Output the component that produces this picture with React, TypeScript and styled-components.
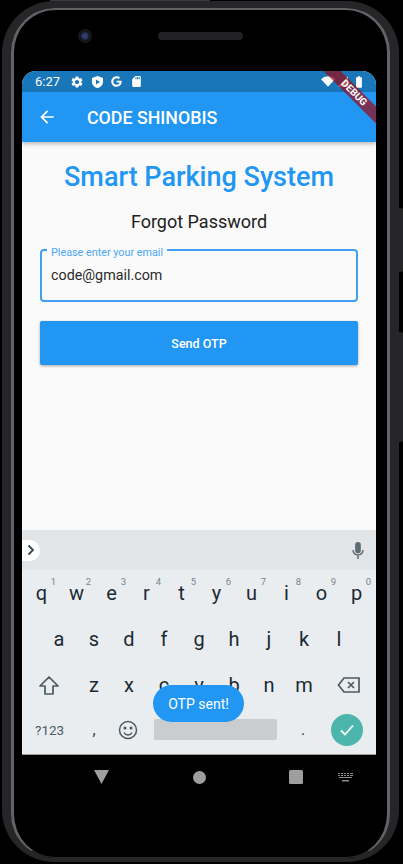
import React from 'react';
import styled, { createGlobalStyle } from 'styled-components';
import { FaGoogle } from 'react-icons/fa';
import { MdArrowBack, MdBatteryFull, MdSdCard, MdSettings } from 'react-icons/md';

const Global = createGlobalStyle`
    html, body { margin: 0; padding: 0; background: #000; }
    body { width: 403px; height: 864px; overflow: hidden; font-family: Roboto, "Liberation Sans", sans-serif; }
`;

const Shell = styled.div`
    position: relative;
    width: 397px;
    height: 861px;
    box-sizing: border-box;
    margin: 1px 0 0 2px;
    border-style: solid;
    border-width: 7px 9px 4px 9px;
    border-color: #262628;
    border-radius: 52px;
    background: #000;
`;
const Inner = styled.div`
    height: 100%;
    box-sizing: border-box;
    border-style: solid;
    border-width: 2px 3px 1px 3px;
    border-color: #626367 #626367 #2a2a2a #626367;
    border-radius: 44px;
    background: #000;
    padding: 0 11px 0 8px;
    display: flex;
    flex-direction: column;
`;
const SideButton = styled.div<{ $top: number; $height: number }>`
    position: absolute;
    top: ${p => p.$top}px;
    right: -13px;
    width: 4px;
    height: ${p => p.$height}px;
    background: #262628;
    border-radius: 0 2px 2px 0;
`;
const TopButton = styled.div`
    position: absolute;
    top: -8px;
    left: 39px;
    width: 160px;
    height: 1px;
    background: #3a3a3c;
`;
const Bezel = styled.div`
    height: 61px;
    flex: none;
    box-sizing: border-box;
    display: flex;
    align-items: center;
    padding: 0 0 10px 56px;
    gap: 66px;
`;
const Camera = styled.div`
    width: 14px;
    height: 14px;
    border-radius: 50%;
    background: radial-gradient(circle, #2f3d6b 0 22%, #12141a 48%, #1d1d20 100%);
`;
const Speaker = styled.div`
    width: 85px;
    height: 8px;
    border-radius: 4px;
    background: #222225;
`;
const Screen = styled.div`
    width: 354px;
    height: 684px;
    flex: none;
    position: relative;
    overflow: hidden;
    border-radius: 14px 14px 0 0;
    background: #fafafa;
    display: flex;
    flex-direction: column;
`;
const StatusBar = styled.div`
    height: 21px;
    flex: none;
    background: #1976b9;
    color: #fff;
    display: flex;
    align-items: center;
    padding: 0 13px;
    font-size: 13px;
`;
const Clock = styled.span`
    width: 35px;
`;
const StatusIcons = styled.div`
    display: flex;
    align-items: center;
    gap: 8px;
`;
const SystemIcons = styled.div`
    display: flex;
    align-items: center;
    gap: 3px;
    margin-left: auto;
`;
const BatteryIcon = styled(MdBatteryFull)`
    margin: 0 -3px 0 1px;
`;
const AppBar = styled.div`
    height: 50px;
    flex: none;
    background: #2196f3;
    color: #fff;
    display: flex;
    align-items: center;
    padding-left: 15px;
    box-shadow: 0 2px 4px rgba(0, 0, 0, 0.25);
    z-index: 1;
`;
const AppTitle = styled.div`
    font-size: 17.8px;
    font-weight: 500;
    margin-left: 30px;
`;
const Ribbon = styled.div`
    position: absolute;
    top: 16px;
    right: -23px;
    width: 90px;
    height: 12px;
    line-height: 12px;
    background: rgba(157, 7, 17, 0.7);
    color: #fff;
    font-size: 10px;
    font-weight: 700;
    text-align: center;
    transform: rotate(45deg);
    z-index: 3;
`;
const Body = styled.div`
    flex: 1;
    display: flex;
    flex-direction: column;
    padding: 0 18px;
`;
const Heading = styled.h1`
    margin: 19px 0 0;
    font-size: 27px;
    line-height: 32px;
    font-weight: 500;
    color: #2196f3;
    text-align: center;
    white-space: nowrap;
`;
const SubHeading = styled.h2`
    margin: 18px 0 0;
    font-size: 18px;
    line-height: 22px;
    font-weight: 400;
    color: #212121;
    text-align: center;
`;
const Field = styled.div`
    position: relative;
    height: 53px;
    box-sizing: border-box;
    margin-top: 16px;
    border: 2px solid #42a0f3;
    border-radius: 4px;
    padding: 15px 9px;
    font-size: 14.3px;
    line-height: 18px;
    color: #2a2a2a;
`;
const FieldLabel = styled.span`
    position: absolute;
    top: -5px;
    left: 5px;
    padding: 0 4px;
    background: #fafafa;
    color: #4aa8f5;
    font-size: 10.8px;
    line-height: 13px;
`;
const SendButton = styled.div`
    margin-top: 19px;
    height: 44px;
    background: #2196f3;
    color: #fff;
    border-radius: 2px;
    display: flex;
    align-items: center;
    justify-content: center;
    font-size: 12.5px;
    font-weight: 500;
    box-shadow: 0 1px 3px rgba(0, 0, 0, 0.35);
`;
const Keyboard = styled.div`
    height: 225px;
    flex: none;
    background: #e9edf0;
    border-bottom: 1px solid #9a9c9e;
    box-sizing: border-box;
    display: flex;
    flex-direction: column;
`;
const Suggestions = styled.div`
    height: 40px;
    flex: none;
    background: #e1e5e8;
    display: flex;
    align-items: center;
    justify-content: space-between;
    padding-right: 11px;
`;
const Expand = styled.div`
    width: 18px;
    height: 21px;
    background: #fff;
    border-radius: 0 11px 11px 0;
    display: flex;
    align-items: center;
    justify-content: center;
`;
const KeyRow = styled.div`
    height: 46px;
    flex: none;
    display: flex;
    justify-content: center;
`;
const Key = styled.div<{ $wide?: boolean }>`
    position: relative;
    width: 35px;
    flex: ${p => (p.$wide ? '1' : 'none')};
    display: flex;
    align-items: center;
    justify-content: center;
    font-size: 20px;
    color: #1c2a33;
`;
const Hint = styled.span`
    position: absolute;
    top: 7px;
    right: 3px;
    font-size: 9.5px;
    line-height: 10px;
    color: #7b8388;
`;
const BottomRow = styled.div`
    flex: 1;
    display: flex;
    align-items: center;
    padding: 0 0 3px 13px;
    color: #4d5a62;
`;
const Symbols = styled.span`
    width: 36px;
    font-size: 13.5px;
`;
const Punct = styled.span<{ $w: number }>`
    width: ${p => p.$w}px;
    text-align: center;
    font-size: 16px;
    color: #33424b;
    display: flex;
    justify-content: center;
`;
const SpaceBar = styled.div`
    width: 123px;
    height: 21px;
    margin-left: 15px;
    border-radius: 2px;
    background: #c9cdd0;
`;
const Enter = styled.div`
    width: 32px;
    height: 32px;
    border-radius: 50%;
    margin-left: 2px;
    background: #4db6ac;
    display: flex;
    align-items: center;
    justify-content: center;
`;
const Toast = styled.div`
    position: absolute;
    left: 131px;
    bottom: 33px;
    width: 91px;
    height: 37px;
    border-radius: 19px;
    background: #2196f3;
    color: #fff;
    font-size: 14px;
    display: flex;
    align-items: center;
    justify-content: center;
    z-index: 2;
`;
const NavBar = styled.div`
    height: 44px;
    flex: none;
    display: flex;
    align-items: center;
    padding-left: 72px;
    gap: 83.5px;
`;
const NavKeyboard = styled.div`
    margin-left: -48.5px;
    display: flex;
    align-items: center;
`;

const TOP_ROW = [['q', '1'], ['w', '2'], ['e', '3'], ['r', '4'], ['t', '5'], ['y', '6'], ['u', '7'], ['i', '8'], ['o', '9'], ['p', '0']];
const MID_ROW = ['a', 's', 'd', 'f', 'g', 'h', 'j', 'k', 'l'];
const LOW_ROW = ['z', 'x', 'c', 'v', 'b', 'n', 'm'];

export default function App() {
    return <Shell>
        <Global />
        <TopButton />
        <SideButton $top={200} $height={64} />
        <SideButton $top={324} $height={110} />
        <Inner>
            <Bezel>
                <Camera />
                <Speaker />
            </Bezel>
            <Screen>
                <StatusBar>
                    <Clock>6:27</Clock>
                    <StatusIcons>
                        <MdSettings size={14} color="#fff" />
                        <svg width="11" height="12" viewBox="0 0 22 24" fill="#fff"><path fillRule="evenodd" d="M11 0 0 4v8c0 5.500 4.600 10.500 11 12 6.400-1.500 11-6.500 11-12V4zM8 7l8 5-8 5z" /></svg>
                        <FaGoogle size={11} color="#fff" />
                        <MdSdCard size={13} color="#fff" />
                    </StatusIcons>
                    <SystemIcons>
                        <svg width="14" height="11" viewBox="0 0 24 18" fill="#fff"><path d="M12 18 0 5a17 17 0 0 1 24 0z" /></svg>
                        <svg width="10" height="11" viewBox="0 0 12 12" fill="#fff"><path d="M12 0v12H0z" /></svg>
                        <BatteryIcon size={14} color="#fff" />
                    </SystemIcons>
                </StatusBar>
                <AppBar>
                    <MdArrowBack size={20} color="#fff" />
                    <AppTitle>CODE SHINOBIS</AppTitle>
                </AppBar>
                <Ribbon>DEBUG</Ribbon>
                <Body>
                    <Heading>Smart Parking System</Heading>
                    <SubHeading>Forgot Password</SubHeading>
                    <Field>
                        <FieldLabel>Please enter your email</FieldLabel>
                        code@gmail.com
                    </Field>
                    <SendButton>Send OTP</SendButton>
                </Body>
                <Keyboard>
                    <Suggestions>
                        <Expand>
                            <svg width="10" height="12" viewBox="0 0 10 12" fill="none" stroke="#37474f" strokeWidth="1.800"><path d="m2.500 1.500 4.500 4.500-4.500 4.500" /></svg>
                        </Expand>
                        <svg width="14" height="17" viewBox="0 0 14 18" fill="#5f6b73"><path d="M7 0a3 3 0 0 0-3 3v6a3 3 0 0 0 6 0V3a3 3 0 0 0-3-3zM1 8.500h1.500a4.500 4.500 0 0 0 9 0H13a6 6 0 0 1-5.200 5.900V18H6.200v-3.600A6 6 0 0 1 1 8.500z" /></svg>
                    </Suggestions>
                    <KeyRow>
                        {TOP_ROW.map(([letter, digit]) => <Key key={letter}>{letter}<Hint>{digit}</Hint></Key>)}
                    </KeyRow>
                    <KeyRow>
                        {MID_ROW.map(letter => <Key key={letter}>{letter}</Key>)}
                    </KeyRow>
                    <KeyRow>
                        <Key $wide>
                            <svg width="22" height="21" viewBox="0 0 22 21" fill="none" stroke="#4d5a62" strokeWidth="1.700"><path d="M11 2 2 11h5v8h8v-8h5z" strokeLinejoin="round" /></svg>
                        </Key>
                        {LOW_ROW.map(letter => <Key key={letter}>{letter}</Key>)}
                        <Key $wide>
                            <svg width="24" height="18" viewBox="0 0 24 18" fill="none" stroke="#4d5a62" strokeWidth="1.700"><path d="M7 2h15v14H7l-5.500-7zM11 6l6 6M17 6l-6 6" /></svg>
                        </Key>
                    </KeyRow>
                    <BottomRow>
                        <Symbols>?123</Symbols>
                        <Punct $w={46}>,</Punct>
                        <Punct $w={22}>
                            <svg width="20" height="20" viewBox="0 0 20 20" fill="none" stroke="#4d5a62" strokeWidth="1.500"><circle cx="10" cy="10" r="8.500" /><path d="M6 12.500a4.500 4.500 0 0 0 8 0" /><circle cx="7" cy="8" r=".8" fill="#4d5a62" /><circle cx="13" cy="8" r=".8" fill="#4d5a62" /></svg>
                        </Punct>
                        <SpaceBar />
                        <Punct $w={52}>.</Punct>
                        <Enter>
                            <svg width="14" height="12" viewBox="0 0 14 12" fill="none" stroke="#fff" strokeWidth="1.800"><path d="m1 6.500 4 4L13 1.500" /></svg>
                        </Enter>
                    </BottomRow>
                </Keyboard>
                <Toast>OTP sent!</Toast>
            </Screen>
            <NavBar>
                <svg width="15" height="14" viewBox="0 0 15 14" fill="#9e9e9e"><path d="M0 0h15l-7.500 14z" /></svg>
                <svg width="13" height="13" viewBox="0 0 14 14" fill="#9e9e9e"><circle cx="7" cy="7" r="7" /></svg>
                <svg width="14" height="14" viewBox="0 0 14 14" fill="#9e9e9e"><rect width="14" height="14" rx="1.500" /></svg>
                <NavKeyboard>
                    <svg width="15" height="9" viewBox="0 0 15 9" fill="#8c8c8c"><path d="M0 0h2v1H0zm3 0h2v1H3zm3 0h2v1H6zm3 0h2v1H9zm3 0h3v1h-3zM0 2h2v1H0zm3 0h2v1H3zm3 0h2v1H6zm3 0h2v1H9zm3 0h3v1h-3zM1 4h13v1H1zM4 7h7v1.500H4z" /></svg>
                </NavKeyboard>
            </NavBar>
        </Inner>
    </Shell>
}
